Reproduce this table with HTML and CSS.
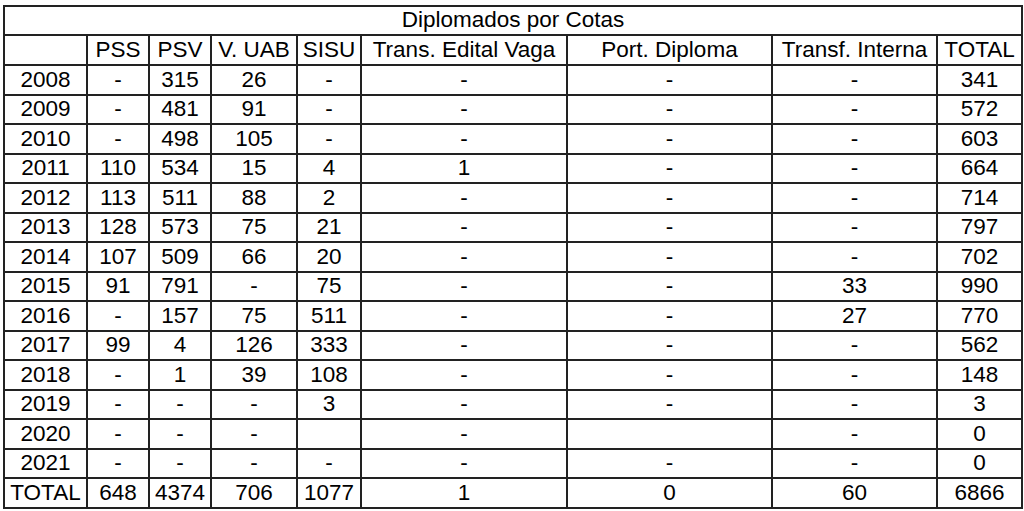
FILE: index.html
```html
<!DOCTYPE html>
<html lang="pt">
<head>
<meta charset="utf-8">
<title>Diplomados por Cotas</title>
<link rel="stylesheet" href="styles.css">
</head>
<body>
<table class="grid">
  <colgroup>
    <col class="c-year"><col class="c-pss"><col class="c-psv"><col class="c-uab"><col class="c-sisu"><col class="c-trans"><col class="c-port"><col class="c-transf"><col class="c-total">
  </colgroup>
  <thead>
    <tr class="title"><th colspan="9">Diplomados por Cotas</th></tr>
    <tr class="head"><th></th><th>PSS</th><th>PSV</th><th>V. UAB</th><th>SISU</th><th>Trans. Edital Vaga</th><th>Port. Diploma</th><th>Transf. Interna</th><th>TOTAL</th></tr>
  </thead>
  <tbody>
    <tr><td>2008</td><td>-</td><td>315</td><td>26</td><td>-</td><td>-</td><td>-</td><td>-</td><td>341</td></tr>
    <tr><td>2009</td><td>-</td><td>481</td><td>91</td><td>-</td><td>-</td><td>-</td><td>-</td><td>572</td></tr>
    <tr><td>2010</td><td>-</td><td>498</td><td>105</td><td>-</td><td>-</td><td>-</td><td>-</td><td>603</td></tr>
    <tr><td>2011</td><td>110</td><td>534</td><td>15</td><td>4</td><td>1</td><td>-</td><td>-</td><td>664</td></tr>
    <tr><td>2012</td><td>113</td><td>511</td><td>88</td><td>2</td><td>-</td><td>-</td><td>-</td><td>714</td></tr>
    <tr><td>2013</td><td>128</td><td>573</td><td>75</td><td>21</td><td>-</td><td>-</td><td>-</td><td>797</td></tr>
    <tr><td>2014</td><td>107</td><td>509</td><td>66</td><td>20</td><td>-</td><td>-</td><td>-</td><td>702</td></tr>
    <tr><td>2015</td><td>91</td><td>791</td><td>-</td><td>75</td><td>-</td><td>-</td><td>33</td><td>990</td></tr>
    <tr><td>2016</td><td>-</td><td>157</td><td>75</td><td>511</td><td>-</td><td>-</td><td>27</td><td>770</td></tr>
    <tr><td>2017</td><td>99</td><td>4</td><td>126</td><td>333</td><td>-</td><td>-</td><td>-</td><td>562</td></tr>
    <tr><td>2018</td><td>-</td><td>1</td><td>39</td><td>108</td><td>-</td><td>-</td><td>-</td><td>148</td></tr>
    <tr><td>2019</td><td>-</td><td>-</td><td>-</td><td>3</td><td>-</td><td>-</td><td>-</td><td>3</td></tr>
    <tr><td>2020</td><td>-</td><td>-</td><td>-</td><td></td><td>-</td><td></td><td>-</td><td>0</td></tr>
    <tr><td>2021</td><td>-</td><td>-</td><td>-</td><td>-</td><td>-</td><td>-</td><td>-</td><td>0</td></tr>
    <tr><td>TOTAL</td><td>648</td><td>4374</td><td>706</td><td>1077</td><td>1</td><td>0</td><td>60</td><td>6866</td></tr>
  </tbody>
</table>
</body>
</html>
```
FILE: styles.css
```css
html, body {
  margin: 0;
  padding: 0;
  background: #ffffff;
}
body {
  padding: 5px 0 0 3px;
  font-family: "Liberation Sans", Arial, sans-serif;
  color: #000000;
}
.grid {
  border-collapse: collapse;
  table-layout: fixed;
  width: 1018px;
  font-size: 22.5px;
  line-height: 1;
}
.grid th, .grid td {
  border: 2px solid #222222;
  padding: 0;
  text-align: center;
  font-weight: normal;
  white-space: nowrap;
  overflow: hidden;
}
.c-year { width: 83px; }
.c-pss { width: 62px; }
.c-psv { width: 62px; }
.c-uab { width: 86px; }
.c-sisu { width: 64px; }
.c-trans { width: 206px; }
.c-port { width: 205px; }
.c-transf { width: 165px; }
.c-total { width: 85px; }
.title th { height: 27px; }
.head th { height: 28px; }
.grid tbody td { height: 27.53px; }
```
